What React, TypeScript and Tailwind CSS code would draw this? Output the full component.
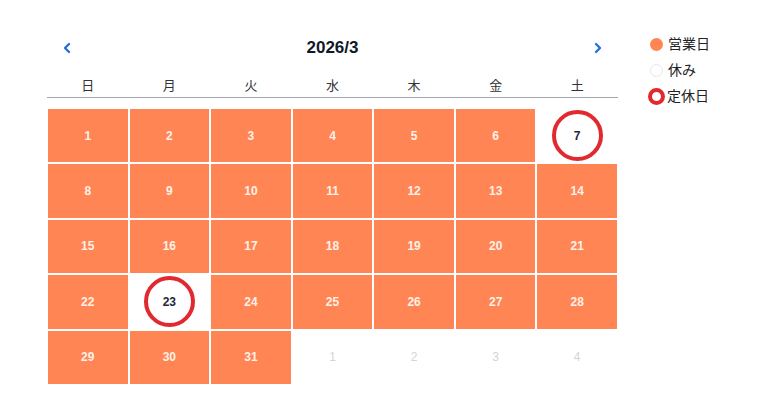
import { ChevronLeft, ChevronRight } from "lucide-react";

const weekdays = ["日", "月", "火", "水", "木", "金", "土"];

type Day = { n: number; kind: "open" | "closed" | "other" };

const closed = [7, 23];

const days: Day[] = [
    ...Array.from({ length: 31 }, (_, i) => ({
        n: i + 1,
        kind: closed.includes(i + 1) ? ("closed" as const) : ("open" as const),
    })),
    ...[1, 2, 3, 4].map((n) => ({ n, kind: "other" as const })),
];

const DayCell = ({ day }: { day: Day }) => {
    if (day.kind === "open") {
        return (
            <div className="h-[53.4px] bg-[#ff8555] flex items-center justify-center text-[12px] font-semibold text-[#fff1e8]">
                {day.n}
            </div>
        );
    }
    if (day.kind === "closed") {
        return (
            <div className="h-[53.4px] flex items-center justify-center">
                <div className="w-[51px] h-[51px] rounded-full border-[4px] border-[#e02a2f] flex items-center justify-center text-[12px] font-semibold text-[#1f2937]">
                    {day.n}
                </div>
            </div>
        );
    }
    return (
        <div className="h-[53.4px] flex items-center justify-center text-[12px] text-[#d4d4d8]">
            {day.n}
        </div>
    );
};

const App = () => {
    return (
        <div
            className="w-[768px] h-[402px] bg-white flex pl-[47px] pt-[33px]"
            style={{ fontFamily: '"Helvetica", "Liberation Sans", "Noto Sans CJK JP", sans-serif' }}
        >
            <div className="w-[571px]">
                <div className="h-[30px] flex items-center justify-between px-[12px]">
                    <ChevronLeft className="w-[16px] h-[16px] text-[#1e6fe0]" strokeWidth={3.5} />
                    <span className="text-[17px] font-bold text-[#111827]">2026/3</span>
                    <ChevronRight className="w-[16px] h-[16px] text-[#1e6fe0]" strokeWidth={3.5} />
                </div>
                <div className="grid grid-cols-7 h-[35px] items-center border-b border-[#a3a3ab] text-[13px] text-[#333]">
                    {weekdays.map((w) => (
                        <div key={w} className="text-center pt-[12px]">{w}</div>
                    ))}
                </div>
                <div className="grid grid-cols-7 gap-[2px] mt-[11px] ml-[1px] w-[569px]">
                    {days.map((d, i) => (
                        <DayCell key={i} day={d} />
                    ))}
                </div>
            </div>
            <div className="ml-[32px] pt-[1px] flex flex-col gap-[5px] text-[14px] text-[#222]">
                <div className="flex items-center gap-[5px]">
                    <span className="w-[13px] h-[13px] rounded-full bg-[#ff8555]" />
                    <span>営業日</span>
                </div>
                <div className="flex items-center gap-[5px]">
                    <span className="w-[13px] h-[13px] rounded-full border border-[#e5e7eb]" />
                    <span>休み</span>
                </div>
                <div className="flex items-center gap-[2px] -ml-[2px]">
                    <span className="w-[17px] h-[17px] rounded-full border-[4px] border-[#e02a2f]" />
                    <span>定休日</span>
                </div>
            </div>
        </div>
    );
};

export default App;
